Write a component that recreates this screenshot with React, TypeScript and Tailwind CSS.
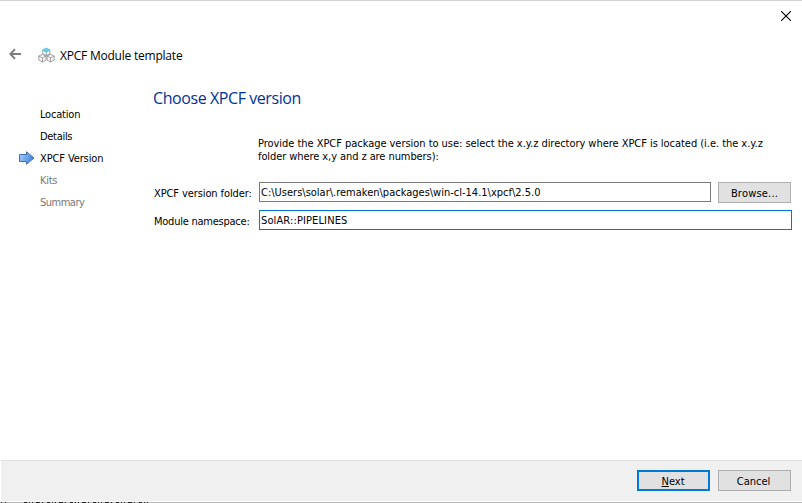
import React from "react";

const steps = [
  { name: "Location", state: "done", fit: "tracking-[-0.2px]" },
  { name: "Details", state: "done", fit: "tracking-[-0.3px]" },
  { name: "XPCF Version", state: "current", fit: "tracking-[-0.12px]" },
  { name: "Kits", state: "todo", fit: "tracking-[-0.3px]" },
  { name: "Summary", state: "todo", fit: "tracking-[-0.5px]" },
];

function BackArrow() {
  return (
    <svg width="13" height="12" viewBox="0 0 13 12" fill="none" stroke="#7c7c7c" strokeWidth="1.9">
      <path d="M1.2 6H12M6 1.2L1.4 6L6 10.8" />
    </svg>
  );
}

function ModuleIcon() {
  return (
    <svg width="17" height="16" viewBox="0 0 17 16" fill="none" stroke="#8b8b8b" strokeWidth="0.8">
      <path d="M4.5 6.8L8.3 8.6L12 6.8M4.8 3V7M11.8 3V7M8.3 5V9" />
      <path fill="#f7f7f7" d="M0.8 9L4.5 7.4L8 9V13L4.5 15L0.8 13ZM0.8 9L4.5 10.8L8 9M4.5 10.8V15" />
      <path fill="#f7f7f7" d="M9 9L12.5 7.4L16.2 9V13L12.5 15L9 13ZM9 9L12.5 10.8L16.2 9M12.5 10.8V15" />
      <path fill="#65cbea" stroke="#65c3e0" d="M4.8 2.7L8.3 1L11.8 2.7V3.6L8.3 5.2L4.8 3.6Z" />
    </svg>
  );
}

function StepArrow() {
  return (
    <svg width="17" height="15" viewBox="0 0 17 15">
      <defs>
        <linearGradient id="step" x1="0" y1="0" x2="1" y2="0.3">
          <stop offset="0" stopColor="#a9d0fb" />
          <stop offset="1" stopColor="#4387df" />
        </linearGradient>
      </defs>
      <path d="M1.5 3.5H8.5V0.8L16 7L8.5 13.2V10.5H1.5Z" fill="url(#step)" stroke="#416fae" />
    </svg>
  );
}

export default function App() {
  return (
    <div className="flex h-[503px] w-[802px] flex-col overflow-hidden border-t border-[#d4d4d4] bg-white font-['DejaVu_Sans_Condensed','DejaVu_Sans',sans-serif] text-[11px] leading-[13px] text-black">
      <header className="h-[75px] shrink-0">
        <div className="flex h-[44px] justify-end pt-[10px] pr-[11px]">
          <svg width="10" height="10" viewBox="0 0 10 10" stroke="#000" strokeWidth="1.1">
            <path d="M0 0L10 10M10 0L0 10" />
          </svg>
        </div>
        <div className="flex h-[20px] items-center pl-[9px] font-['Open_Sans',sans-serif] text-[12px]">
          <div className="w-[29px] pb-[3px]"><BackArrow /></div>
          <div className="w-[22px]"><ModuleIcon /></div>
          <h1 className="tracking-[-0.22px] whitespace-nowrap">XPCF Module template</h1>
        </div>
      </header>
      <div className="flex h-[384px] shrink-0">
        <nav className="w-[153px] shrink-0 pt-[27px] pl-[18px]">
          {steps.map((s) => (
            <div key={s.name} className="flex h-[22px] items-center">
              <div className="w-[22px]">{s.state === "current" && <StepArrow />}</div>
              <span className={`${s.fit} ${s.state === "todo" ? "text-[#787878]" : ""}`}>{s.name}</span>
            </div>
          ))}
        </nav>
        <main className="w-[639px] shrink-0 pt-[11px]">
          <h2 className="h-[50px] font-['Open_Sans',sans-serif] text-[16px] leading-[22px] tracking-[-0.42px] text-[#003399]">Choose XPCF version</h2>
          <p className="pl-[105px] whitespace-nowrap">
            <span className="block tracking-[-0.04px]">Provide the XPCF package version to use: select the x.y.z directory where XPCF is located (i.e. the x.y.z</span>
            <span className="block tracking-[-0.08px]">folder where x,y and z are numbers):</span>
          </p>
          <div className="mt-[19px] flex h-[22px] items-start">
            <label className="w-[106px] shrink-0 pt-[5px] pl-px tracking-[-0.1px] whitespace-nowrap">XPCF version folder:</label>
            <div className="flex h-[20px] w-[452px] items-center border border-[#7a7a7a] pt-px pl-[1px] whitespace-nowrap"><span>C:\Users\solar\.remaken\packages\win-cl-14.1\xpcf\2.5.0</span></div>
            <button className="ml-[7px] flex h-[21px] w-[73px] items-center justify-center border border-[#adadad] bg-[#e1e1e1] pt-px tracking-[0.2px]">Browse...</button>
          </div>
          <div className="mt-[6px] flex items-start">
            <label className="w-[106px] shrink-0 pt-[5px] pl-px tracking-[-0.24px] whitespace-nowrap">Module namespace:</label>
            <div className="flex h-[20px] w-[533px] items-center border border-[#0078d7] pt-px pl-[1px]"><span className="tracking-[0.12px]">SolAR::PIPELINES</span></div>
          </div>
        </main>
      </div>
      <footer className="ml-px flex h-[41px] shrink-0 justify-end gap-[8px] border-t border-[#dfdfdf] bg-[#f0f0f0] pt-[9px] pr-[11px]">
        <button className="flex h-[21px] w-[73px] items-center justify-center border-2 border-[#0078d7] bg-[#e1e1e1] pt-px pr-px"><span><u>N</u>ext</span></button>
        <button className="flex h-[21px] w-[73px] items-center justify-center border border-[#adadad] bg-[#e1e1e1] pt-px pr-[2px]">Cancel</button>
      </footer>
      <div className="mt-px h-px shrink-0 bg-[#b8b8b8]">
        <svg className="block" width="150" height="1" viewBox="0 0 150 1" stroke="#1c1c1c">
          <path d="M1 .5H2M5 .5H6" />
          <path d="M24 .5H148" strokeDasharray="3 2 1 2 1 3 4 2 1 4" />
        </svg>
      </div>
    </div>
  );
}
